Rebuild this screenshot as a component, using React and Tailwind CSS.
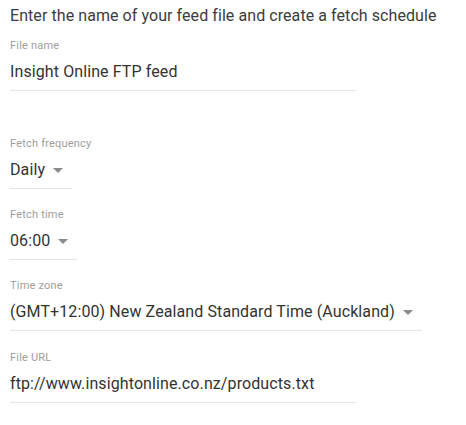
import React from "react";

const font = { fontFamily: "Roboto, 'Liberation Sans', sans-serif" };

function Caret() {
  return (
    <svg width="10" height="5" viewBox="0 0 10 5" className="ml-2 shrink-0">
      <path d="M0 0 L10 0 L5 5 Z" fill="#8a8a8a" />
    </svg>
  );
}

function Field({ label, value, width, select, className = "" }) {
  return (
    <div className={className}>
      <div className="text-[11px] leading-[16px] tracking-[0.2px] text-[#9e9e9e]">{label}</div>
      <div
        className={`mt-[6px] flex items-center pb-[6px] border-b border-[#e6e6e6] text-[16px] leading-[24px] tracking-[0.1px] text-[#333333] ${width}`}
      >
        <span>{value}</span>
        {select && <Caret />}
      </div>
    </div>
  );
}

export default function App() {
  return (
    <div className="min-h-screen bg-white pl-[10px] pt-[6px]" style={font}>
      <h2 className="text-[16px] leading-[20px] tracking-[0.07px] text-[#3c3c3c] font-normal">
        Enter the name of your feed file and create a fetch schedule
      </h2>
      <Field
        className="mt-[12px]"
        label="File name"
        value="Insight Online FTP feed"
        width="w-[346px]"
      />
      <Field
        className="mt-[45px]"
        label="Fetch frequency"
        value="Daily"
        width="w-fit pr-[9px]"
        select
      />
      <Field
        className="mt-[18px]"
        label="Fetch time"
        value="06:00"
        width="w-fit pr-[9px]"
        select
      />
      <Field
        className="mt-[18px]"
        label="Time zone"
        value="(GMT+12:00) New Zealand Standard Time (Auckland)"
        width="w-fit pr-[9px]"
        select
      />
      <Field
        className="mt-[19px]"
        label="File URL"
        value="ftp://www.insightonline.co.nz/products.txt"
        width="w-[346px]"
      />
    </div>
  );
}
